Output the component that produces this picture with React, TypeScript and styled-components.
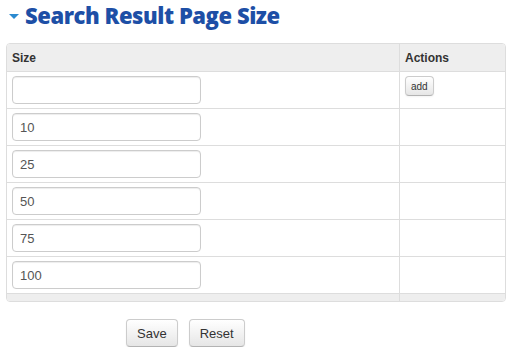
import type { FC } from "react";
import styled, { createGlobalStyle } from "styled-components";

const GlobalStyle = createGlobalStyle`
  body {
    margin: 0;
    background: #ffffff;
    font-family: "Liberation Sans", Arial, sans-serif;
    font-size: 13px;
    color: #333333;
  }
`;

const Page = styled.div`
  padding: 3px 11px 0 6px;
`;

const Title = styled.h2`
  display: flex;
  align-items: center;
  gap: 6px;
  margin: -3px 0 0;
  padding: 0 0 0 3px;
  height: 30px;
  line-height: 30px;
  font-family: "Open Sans", sans-serif;
  font-weight: 800;
  font-size: 22px;
  letter-spacing: -0.45px;
  color: #1d4fa6;
`;

const Caret = styled.span`
  width: 0;
  height: 0;
  border-left: 5px solid transparent;
  border-right: 5px solid transparent;
  border-top: 5px solid #2b8ad0;
  margin-top: 2px;
`;

const Table = styled.table`
  margin-top: 13px;
  width: 100%;
  border-collapse: separate;
  border-spacing: 0;
  border: 1px solid #dddddd;
  border-radius: 4px;
  overflow: hidden;
`;

const HeadCell = styled.th<{ narrow?: boolean }>`
  background: #eeeeee;
  text-align: left;
  font-size: 12px;
  font-weight: bold;
  color: #333333;
  height: 27px;
  padding: 0 5px;
  width: ${(props) => (props.narrow ? "95px" : "auto")};
  border-left: ${(props) => (props.narrow ? "1px solid #dddddd" : "none")};
  border-bottom: 1px solid #dddddd;
`;

const Cell = styled.td<{ side?: boolean }>`
  vertical-align: top;
  padding: 4px 5px;
  height: 28px;
  border-bottom: 1px solid #dddddd;
  border-left: ${(props) => (props.side ? "1px solid #dddddd" : "none")};
`;

const FootCell = styled.td<{ side?: boolean }>`
  background: #eeeeee;
  height: 7px;
  padding: 0;
  border-left: ${(props) => (props.side ? "1px solid #dddddd" : "none")};
`;

const SizeInput = styled.input`
  box-sizing: border-box;
  display: block;
  width: 189px;
  height: 28px;
  padding: 0 7px;
  border: 1px solid #cccccc;
  border-radius: 4px;
  font-family: "Liberation Sans", Arial, sans-serif;
  font-size: 13px;
  color: #555555;
  background: #ffffff;
  box-shadow: inset 0 1px 1px rgba(0, 0, 0, 0.075);
  outline: none;
`;

const Button = styled.button<{ small?: boolean }>`
  box-sizing: border-box;
  height: ${(props) => (props.small ? "20px" : "28px")};
  padding: ${(props) => (props.small ? "0 5px" : "0 10px")};
  font-family: "Liberation Sans", Arial, sans-serif;
  font-size: ${(props) => (props.small ? "10px" : "13px")};
  color: #333333;
  background: linear-gradient(#ffffff, #e6e6e6);
  border: 1px solid #cccccc;
  border-bottom-color: #b3b3b3;
  border-radius: 4px;
  box-shadow: inset 0 1px 0 rgba(255, 255, 255, 0.2), 0 1px 2px rgba(0, 0, 0, 0.05);
  cursor: pointer;
`;

const Actions = styled.div`
  display: flex;
  gap: 11px;
  padding: 17px 0 0 120px;
`;

const sizes = ["", "10", "25", "50", "75", "100"];

const App: FC = () => (
  <Page>
    <GlobalStyle />
    <Title>
      <Caret />
      Search Result Page Size
    </Title>
    <Table>
      <thead>
        <tr>
          <HeadCell>Size</HeadCell>
          <HeadCell narrow>Actions</HeadCell>
        </tr>
      </thead>
      <tbody>
        {sizes.map((size, index) => (
          <tr key={index}>
            <Cell>
              <SizeInput defaultValue={size} />
            </Cell>
            <Cell side>{index === 0 && <Button small>add</Button>}</Cell>
          </tr>
        ))}
        <tr>
          <FootCell />
          <FootCell side />
        </tr>
      </tbody>
    </Table>
    <Actions>
      <Button>Save</Button>
      <Button>Reset</Button>
    </Actions>
  </Page>
);

export default App;
